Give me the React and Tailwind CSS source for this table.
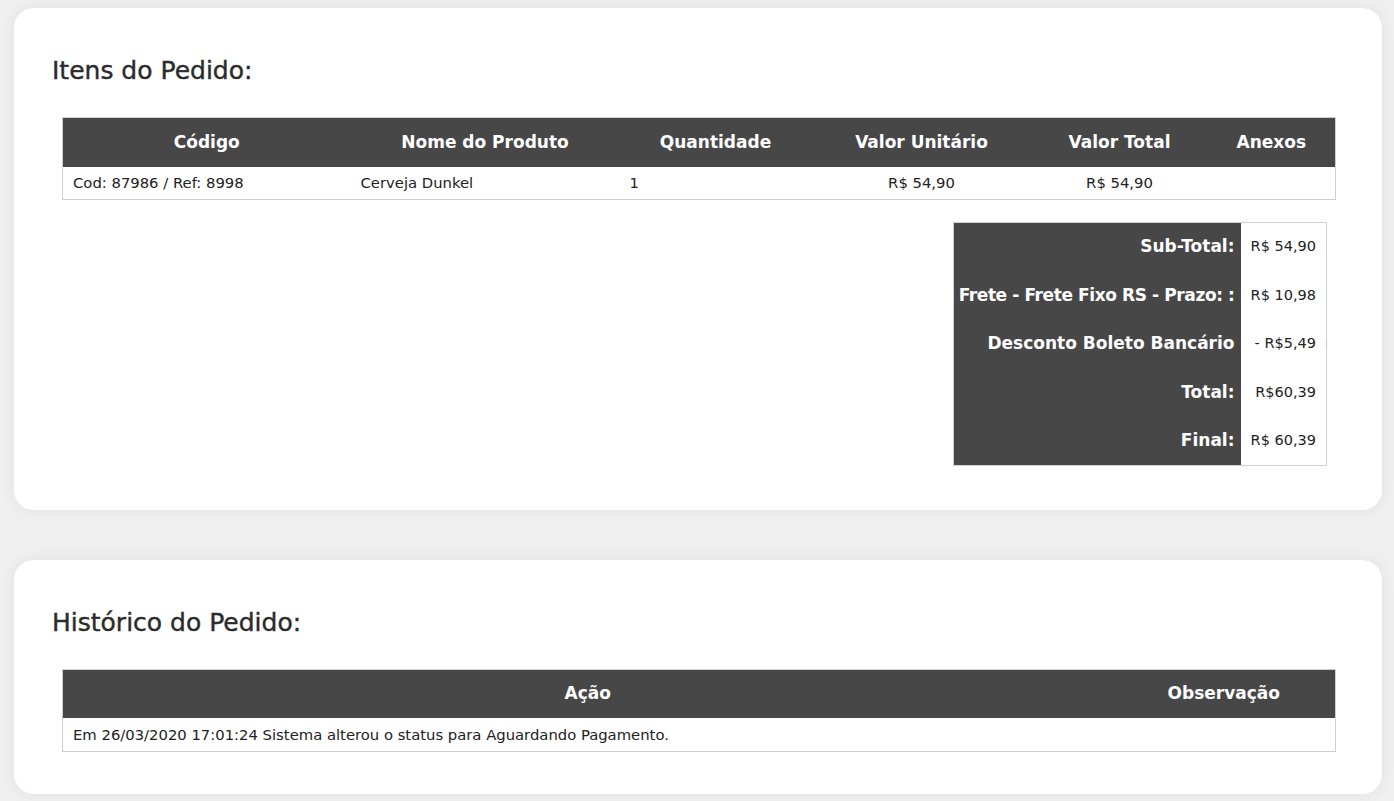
const items = [
    { code: 'Cod: 87986 / Ref: 8998', name: 'Cerveja Dunkel', qty: '1', unit: 'R$ 54,90', total: 'R$ 54,90' }
]

const summary = [
    { label: 'Sub-Total:', value: 'R$ 54,90' },
    { label: 'Frete - Frete Fixo RS - Prazo: :', value: 'R$ 10,98', tight: true },
    { label: 'Desconto Boleto Bancário', value: '- R$5,49' },
    { label: 'Total:', value: 'R$60,39' },
    { label: 'Final:', value: 'R$ 60,39' }
]

function Card({ title, children, className = '' }) {
    return (
        <section className={`bg-white rounded-[20px] shadow-[0_0_18px_rgba(0,0,0,0.07)] px-[38px] ${className}`}>
            <h2 className="text-[25px] leading-[30px] text-[#2b2b2b] [-webkit-text-stroke:0.4px_#2b2b2b]">{title}</h2>
            {children}
        </section>
    )
}

export default function App() {
    return (
        <div className="min-h-screen bg-[#f0f0f0] pl-[14px] pr-[12px] pt-[8px] pb-[8px] text-[#222]" style={{ fontFamily: '"DejaVu Sans", Inter, sans-serif' }}>
            <Card title="Itens do Pedido:" className="pt-[48px] pb-[44px]">
                <table className="mx-[10px] mt-[31px] w-[1273px] table-fixed border-collapse border border-[#cfcfcf]">
                    <colgroup>
                        <col className="w-[288px]" />
                        <col className="w-[269px]" />
                        <col className="w-[192px]" />
                        <col className="w-[220px]" />
                        <col className="w-[176px]" />
                        <col className="w-[128px]" />
                    </colgroup>
                    <thead>
                        <tr className="bg-[#474747] text-white text-[17px] font-bold h-[49px]">
                            <th className="text-center">Código</th>
                            <th className="text-center">Nome do Produto</th>
                            <th className="text-center">Quantidade</th>
                            <th className="text-center">Valor Unitário</th>
                            <th className="text-center">Valor Total</th>
                            <th className="text-center">Anexos</th>
                        </tr>
                    </thead>
                    <tbody>
                        {items.map((it) => (
                            <tr key={it.code} className="h-[33px] text-[14.8px]">
                                <td className="pl-[10px]">{it.code}</td>
                                <td className="pl-[10px]">{it.name}</td>
                                <td className="pl-[10px]">{it.qty}</td>
                                <td className="text-center">{it.unit}</td>
                                <td className="text-center">{it.total}</td>
                                <td></td>
                            </tr>
                        ))}
                    </tbody>
                </table>

                <div className="flex justify-end mr-[17px] mt-[22px]">
                    <table className="border-collapse border border-[#cfcfcf] w-[373px] table-fixed">
                        <colgroup>
                            <col className="w-[287px]" />
                            <col className="w-[86px]" />
                        </colgroup>
                        <tbody>
                            {summary.map((row) => (
                                <tr key={row.label} className="h-[48.6px]">
                                    <th className={`bg-[#474747] text-white text-right pr-[6px] text-[17px] font-bold whitespace-nowrap ${row.tight ? 'tracking-[-0.4px]' : ''}`}>{row.label}</th>
                                    <td className="text-right pr-[10px] text-[14.5px] whitespace-nowrap">{row.value}</td>
                                </tr>
                            ))}
                        </tbody>
                    </table>
                </div>
            </Card>

            <Card title="Histórico do Pedido:" className="mt-[50px] pt-[48px] pb-[42px]">
                <table className="mx-[10px] mt-[31px] w-[1273px] table-fixed border-collapse border border-[#cfcfcf]">
                    <colgroup>
                        <col className="w-[1050px]" />
                        <col className="w-[223px]" />
                    </colgroup>
                    <thead>
                        <tr className="bg-[#474747] text-white text-[17px] font-bold h-[49px]">
                            <th className="text-center">Ação</th>
                            <th className="text-center">Observação</th>
                        </tr>
                    </thead>
                    <tbody>
                        <tr className="h-[33px] text-[14.8px]">
                            <td className="pl-[10px]">Em 26/03/2020 17:01:24 Sistema alterou o status para Aguardando Pagamento.</td>
                            <td></td>
                        </tr>
                    </tbody>
                </table>
            </Card>
        </div>
    )
}
